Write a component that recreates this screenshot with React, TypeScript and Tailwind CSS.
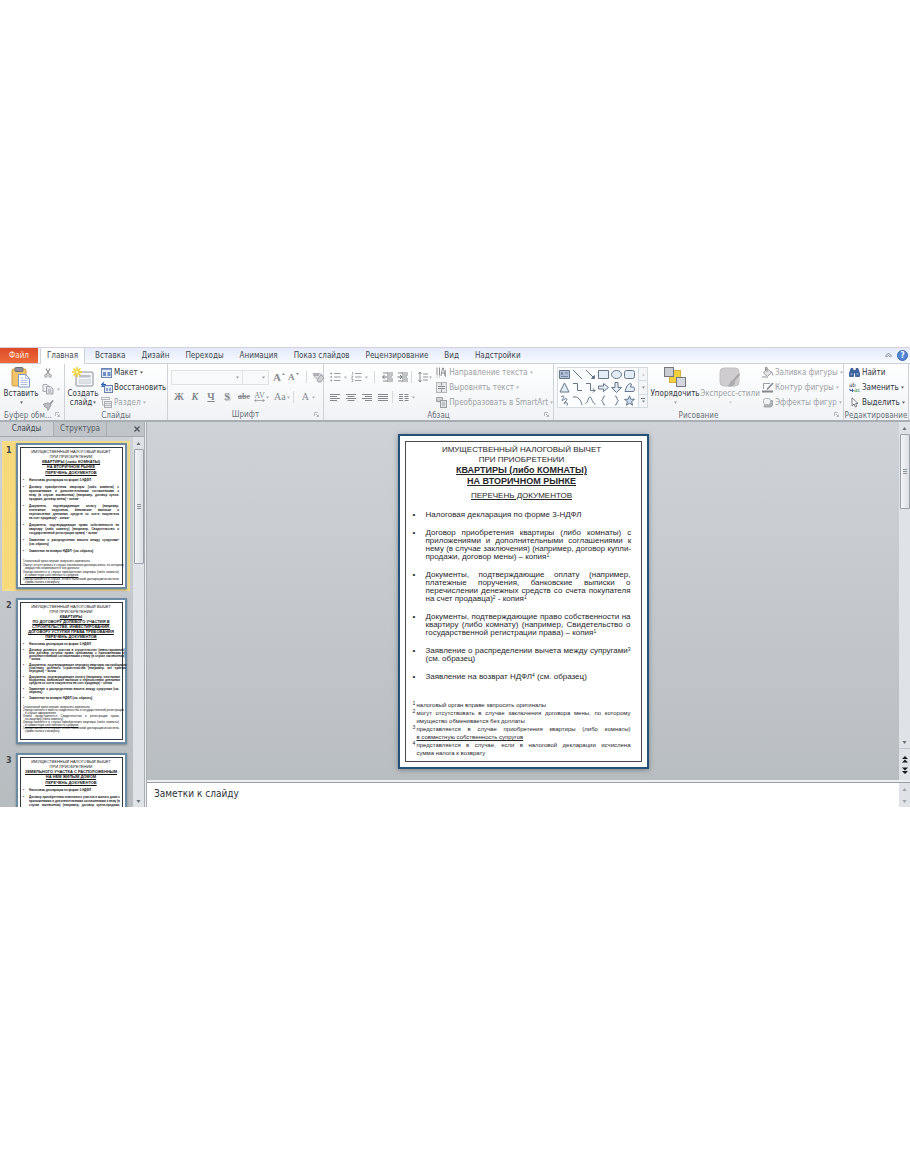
import React from 'react';
import clsx from 'clsx';

type IconProps = { className?: string };

interface Paragraph {
  lines: React.ReactNode[];
}

interface SlideContent {
  title: string[];
  heading: string[];
  subheading: string;
  items: Paragraph[];
  notes: Paragraph[];
}

const sup = (n: number) => <sup className="text-[62%]">{n}</sup>;

const slideOne: SlideContent = {
  title: ['ИМУЩЕСТВЕННЫЙ НАЛОГОВЫЙ ВЫЧЕТ', 'ПРИ ПРИОБРЕТЕНИИ'],
  heading: ['КВАРТИРЫ (либо КОМНАТЫ)', 'НА ВТОРИЧНОМ РЫНКЕ'],
  subheading: 'ПЕРЕЧЕНЬ ДОКУМЕНТОВ',
  items: [
    { lines: ['Налоговая декларация по форме 3-НДФЛ'] },
    {
      lines: [
        'Договор приобретения квартиры (либо комнаты) с',
        'приложениями и дополнительными соглашениями к',
        'нему (в случае заключения) (например, договор купли-',
        <>продажи, договор мены) – копия{sup(1)}</>,
      ],
    },
    {
      lines: [
        'Документы, подтверждающие оплату (например,',
        'платежные поручения, банковские выписки о',
        'перечислении денежных средств со счета покупателя',
        <>на счет продавца){sup(2)} - копия{sup(1)}</>,
      ],
    },
    {
      lines: [
        'Документы, подтверждающие право собственности на',
        'квартиру (либо комнату) (например, Свидетельство о',
        <>государственной регистрации права) – копия{sup(1)}</>,
      ],
    },
    { lines: [<>Заявление о распределении вычета между супругами{sup(3)}</>, '(см. образец)'] },
    { lines: [<>Заявление на возврат НДФЛ{sup(4)} (см. образец)</>] },
  ],
  notes: [
    { lines: ['налоговый орган вправе запросить оригиналы'] },
    {
      lines: [
        'могут отсутствовать в случае заключения договора мены, по которому',
        'имущество обменивается без доплаты',
      ],
    },
    {
      lines: [
        'представляется в случае приобретения квартиры (либо комнаты)',
        <u>в совместную собственность супругов</u>,
      ],
    },
    {
      lines: [
        'представляется в случае, если в налоговой декларации исчислена',
        'сумма налога к возврату',
      ],
    },
  ],
};

const slideTwo: SlideContent = {
  title: slideOne.title,
  heading: [
    'КВАРТИРЫ',
    'ПО ДОГОВОРУ ДОЛЕВОГО УЧАСТИЯ В',
    'СТРОИТЕЛЬСТВЕ, ИНВЕСТИРОВАНИЯ,',
    'ДОГОВОРУ УСТУПКИ ПРАВА ТРЕБОВАНИЯ',
  ],
  subheading: 'ПЕРЕЧЕНЬ ДОКУМЕНТОВ',
  items: [
    { lines: ['Налоговая декларация по форме 3-НДФЛ'] },
    {
      lines: [
        'Договор долевого участия в строительстве (инвестирования)',
        'или договор уступки права требования с приложениями и',
        'дополнительными соглашениями к нему (в случае заключения)',
        '– копия',
      ],
    },
    {
      lines: [
        'Документы, подтверждающие передачу квартиры застройщиком',
        'участнику долевого строительства (например, акт приема-',
        'передачи) – копия',
      ],
    },
    {
      lines: [
        'Документы, подтверждающие оплату (например, платежные',
        'поручения, банковские выписки о перечислении денежных',
        'средств со счета покупателя на счет продавца) – копия',
      ],
    },
    { lines: ['Заявление о распределении вычета между супругами (см.', 'образец)'] },
    { lines: ['Заявление на возврат НДФЛ (см. образец)'] },
  ],
  notes: [
    { lines: ['налоговый орган вправе запросить оригиналы'] },
    {
      lines: [
        'представляется вместо свидетельства о государственной регистрации',
        'в случае оформления',
      ],
    },
    {
      lines: [
        'либо представляется Свидетельство о регистрации права',
        'на квартиру (либо комнату)',
      ],
    },
    {
      lines: [
        'представляется в случае приобретения квартиры (либо комнаты)',
        <u>в совместную собственность супругов</u>,
      ],
    },
    {
      lines: [
        'представляется в случае, если в налоговой декларации исчислена',
        'сумма налога к возврату',
      ],
    },
  ],
};

const slideThree: SlideContent = {
  title: slideOne.title,
  heading: ['ЗЕМЕЛЬНОГО УЧАСТКА С РАСПОЛОЖЕННЫМ', 'НА НЕМ ЖИЛЫМ ДОМОМ'],
  subheading: 'ПЕРЕЧЕНЬ ДОКУМЕНТОВ',
  items: [
    { lines: ['Налоговая декларация по форме 3-НДФЛ'] },
    {
      lines: [
        'Договор приобретения земельного участка и жилого дома с',
        'приложениями и дополнительными соглашениями к нему (в',
        'случае заключения) (например, договор купли-продажи,',
        'договор мены) – копия',
      ],
    },
  ],
  notes: [],
};

function Lines({ lines }: Paragraph) {
  return (
    <>
      {lines.map((line, i) => (
        <span
          key={i}
          className={clsx(
            'block whitespace-nowrap',
            i < lines.length - 1 && 'text-justify [text-align-last:justify]',
          )}
        >
          {line}
        </span>
      ))}
    </>
  );
}

function MainSlide({ slide }: { slide: SlideContent }) {
  return (
    <article className="w-[251px] border-2 border-[#245178] bg-white p-[5px] font-['Liberation_Sans',sans-serif] text-[8px] leading-[8px] text-[#26262b] shadow-[0_1px_5px_rgba(60,70,80,0.5)]">
      <div className="h-[321px] border border-[#4a4a50] pl-[7px] pr-[10px] pt-[3px]">
        <header className="text-center leading-[10px]">
          {slide.title.map((t) => <p key={t}>{t}</p>)}
          {slide.heading.map((t) => (
            <p key={t} className="text-[9px] font-bold leading-[11px] underline">{t}</p>
          ))}
          <p className="mt-1 underline">{slide.subheading}</p>
        </header>
        <ul className="mt-[10px] flex flex-col gap-[10px]">
          {slide.items.map((item, i) => (
            <li key={i} className="flex">
              <span className="w-[13px] shrink-0">•</span>
              <div className="flex-1"><Lines {...item} /></div>
            </li>
          ))}
        </ul>
        <ol className="mt-5 text-[6px]">
          {slide.notes.map((note, i) => (
            <li key={i} className="flex">
              <span className="w-1 shrink-0 text-[5px] leading-[5px]">{i + 1}</span>
              <div className="flex-1"><Lines {...note} /></div>
            </li>
          ))}
        </ol>
      </div>
    </article>
  );
}

function Thumbnail({ slide, number, active }: { slide: SlideContent; number: number; active?: boolean }) {
  const dense = slide.heading.length > 2;
  return (
    <button
      type="button"
      aria-label={`Слайд ${number}`}
      className={clsx(
        'flex w-full shrink-0 border-2 pl-px text-left',
        active ? 'border-[#f3dc8b] bg-linear-to-r from-[#f8d978] to-[#fdf3c4]' : 'border-transparent',
      )}
    >
      <span className="w-[11px] shrink-0 pl-px text-[9px] font-bold leading-[14px] text-[#45484d]">{number}</span>
      <span className="block h-[146px] w-[111px] shrink-0 border-2 border-[#6b8ba5] bg-white p-[2px] font-['Liberation_Sans',sans-serif] text-[3px] leading-[4px] text-[#111] shadow-[0_1px_2px_rgba(60,70,80,0.5)]">
        <span className="block h-full border border-[#35393f] pl-[2px] pr-[3px] pt-px">
          <span className="block text-center text-[4px] leading-[5px]">
            {slide.title.map((t) => <span key={t} className="block whitespace-nowrap">{t}</span>)}
            {slide.heading.map((t) => (
              <span key={t} className="block whitespace-nowrap font-bold underline">{t}</span>
            ))}
            <span className={clsx('block font-bold underline', !dense && 'mt-px')}>{slide.subheading}</span>
          </span>
          <span className={clsx('flex flex-col gap-[3px] font-bold', dense ? 'mt-1 leading-[3px]' : 'mt-[3px]')}>
            {slide.items.map((item, i) => (
              <span key={i} className="flex">
                <span className="w-[6px] shrink-0">•</span>
                <span className="block flex-1"><Lines {...item} /></span>
              </span>
            ))}
          </span>
          <span className={clsx('flex flex-col font-[\'Liberation_Sans_Narrow\',sans-serif] leading-[3px]', dense ? 'mt-[6px]' : 'mt-[7px] gap-px')}>
            {slide.notes.map((note, i) => (
              <span key={i} className="flex">
                <span className="w-[2px] shrink-0">{i + 1}</span>
                <span className="block flex-1"><Lines {...note} /></span>
              </span>
            ))}
          </span>
        </span>
      </span>
    </button>
  );
}

function Caret({ className }: IconProps) {
  return (
    <svg viewBox="0 0 4 3" className={clsx('h-[3px] w-[3px] shrink-0 opacity-80', className)} fill="currentColor" aria-hidden="true">
      <path d="M0 0h4L2 3z" />
    </svg>
  );
}

function Svg({ className = 'h-3 w-3', box = '0 0 12 12', children }: { className?: string; box?: string; children: React.ReactNode }) {
  return (
    <svg viewBox={box} className={clsx('shrink-0', className)} fill="none" stroke="currentColor" strokeWidth="1" aria-hidden="true">
      {children}
    </svg>
  );
}

const PasteIcon = () => (
  <Svg className="h-[21px] w-5" box="0 0 20 21">
    <rect x="1" y="2" width="14" height="17" rx="1.5" fill="#f0c46a" stroke="#d29a3c" />
    <rect x="4" y="0.5" width="8" height="4" rx="1" fill="#8e939b" stroke="#6d7178" />
    <path d="M7.5 7.500h7l4 4v8.500h-11z" fill="#fff" stroke="#7b95c4" />
    <path d="M14.500 7.500v4h4M9.500 11h3M9.500 13.500h7M9.500 15.500h7M9.500 17.500h7" stroke="#8aa3cf" strokeWidth="0.700" />
  </Svg>
);

const ScissorsIcon = () => (
  <Svg className="h-[10px] w-3">
    <path d="M3.500 0.500 8 8M8.500 0.500 4 8" stroke="#85898e" strokeWidth="1.300" />
    <circle cx="3.500" cy="9.500" r="1.600" stroke="#85898e" />
    <circle cx="8.500" cy="9.500" r="1.600" stroke="#85898e" />
  </Svg>
);

const CopyIcon = () => (
  <Svg>
    <path d="M1 1.500h4l2 2v5H1z" fill="#ececee" stroke="#a9adb2" />
    <path d="M4.500 3.500h4l2.500 2.500v5H4.500zM6 7h3M6 9h3.500" fill="#e2e3e6" stroke="#a0a4aa" />
  </Svg>
);

const BrushIcon = () => (
  <Svg className="h-[11px] w-3">
    <path d="m11.500 0.500-4 5" stroke="#8e9297" strokeWidth="1.800" />
    <path d="m1 4.500 5-1.500 3.500 2.500-3.500 6-1-3-2.500-1z" fill="#b9bcc0" stroke="#9a9ea3" />
  </Svg>
);

const NewSlideIcon = () => (
  <Svg className="h-[21px] w-[22px]" box="0 0 22 21">
    <rect x="4" y="5" width="17" height="14" rx="1" fill="#f4f6f8" stroke="#8a9099" />
    <path d="M7 8h11.500v2.500H7z" fill="#b8c0ca" stroke="none" />
    <path d="M7 12.500h11.500v4H7z" fill="#dfe3e8" stroke="#c4cad2" strokeWidth="0.500" />
    <path d="M5 0v10M0 5h10M1.500 1.500l7 7M8.500 1.500l-7 7" stroke="#f0cf2e" strokeWidth="1.500" />
    <circle cx="5" cy="5" r="1.500" fill="#fff6b0" stroke="none" />
  </Svg>
);

const LayoutIcon = () => (
  <Svg className="h-[10px] w-[11px]" box="0 0 11 10">
    <rect x="0.500" y="0.500" width="10" height="9" fill="#e6ecf6" stroke="#6c86b4" />
    <path d="M1 1.500h9" stroke="#8aa2cc" />
    <path d="M2 4h3v4H2zM6.500 4h3v4h-3z" fill="#6f8fc4" stroke="none" />
  </Svg>
);

const ResetIcon = () => (
  <Svg className="h-[11px] w-3" box="0 0 12 11">
    <rect x="3.500" y="3.500" width="8" height="7" fill="#e3e9f4" stroke="#6c7fa6" />
    <path d="M5 6h2v3H5zM8 6h2v3H8z" fill="#8fa5cb" stroke="none" />
    <path d="M1 5V2.500h4M3 0.500l-2.500 2L3 4.500" stroke="#2b62b8" strokeWidth="1.200" />
  </Svg>
);

const SectionIcon = () => (
  <Svg className="h-[11px] w-[11px]" box="0 0 11 11">
    <rect x="0.500" y="0.500" width="8" height="2" stroke="#b4b7bb" />
    <rect x="3.500" y="4.500" width="7" height="6" fill="#ececee" stroke="#a9adb1" />
    <path d="M1.500 3v5h2M4 6.500h6M4 8.500h6" stroke="#b4b7bb" />
  </Svg>
);

const EraserIcon = () => (
  <Svg className="h-3 w-[13px]" box="0 0 13 12">
    <path d="M1 2.500h7l3 2-4 5-5-4z" fill="#dcdde0" stroke="#b3b6ba" />
    <path d="m5 9 4-5 3 3-3 4H6z" fill="#cfd1d4" stroke="#a3a6aa" />
    <path d="M2 4h5" stroke="#808489" />
  </Svg>
);

const BulletsIcon = () => (
  <Svg className="h-[10px] w-[11px]" box="0 0 11 10">
    <path d="M4 1.500h6.500M4 5h6.500M4 8.500h6.500" stroke="#9b9fa3" />
    <path d="M0.500 1.500h1.500M0.500 5h1.500M0.500 8.500h1.500" stroke="#8a8e93" strokeWidth="1.500" />
  </Svg>
);

const NumberingIcon = () => (
  <Svg className="h-[10px] w-[11px]" box="0 0 11 10">
    <path d="M4 1.500h6.500M4 5h6.500M4 8.500h6.500" stroke="#9b9fa3" />
    <path d="M1.500 0v2.500M0.500 4h1.500l-1.500 2h1.500M0.500 7.500h1.500v2H0.500" stroke="#8a8e93" strokeWidth="0.700" />
  </Svg>
);

const IndentIcon = ({ flip }: { flip?: boolean }) => (
  <Svg className="h-[10px] w-3" box="0 0 12 10">
    <path d="M1 1h10M6 3h5M6 5h4M6 7h5M1 9h10" stroke="#85898e" />
    {flip ? <path d="M0.500 5h4M3 3l2 2-2 2" stroke="#6f7378" /> : <path d="M5 5H1M2.500 3l-2 2 2 2" stroke="#6f7378" />}
    <path d="M5.500 0v10" stroke="#9b9fa3" strokeWidth="0.700" />
  </Svg>
);

const SpacingIcon = () => (
  <Svg className="h-3 w-[10px]" box="0 0 10 12">
    <path d="M5 3h5M5 6h5M5 9h5" stroke="#8e9297" />
    <path d="M2 1v10M0.500 3 2 1l1.500 2M0.500 9 2 11l1.500-2" stroke="#7e8287" strokeWidth="0.900" />
  </Svg>
);

const alignPaths: Record<string, string> = {
  left: 'M0 1.500h10M0 3.500h7M0 5.500h10M0 7.500h7',
  center: 'M0 1.500h10M1.500 3.500h7M0 5.500h10M1.500 7.500h7',
  right: 'M0 1.500h10M3 3.500h7M0 5.500h10M3 7.500h7',
  justify: 'M0 1.500h10M0 3.500h10M0 5.500h10M0 7.500h10',
};

const AlignIcon = ({ kind }: { kind: string }) => (
  <Svg className="h-[9px] w-[10px]" box="0 0 10 9">
    <path d={alignPaths[kind]} stroke="#85898e" />
  </Svg>
);

const ColumnsIcon = () => (
  <Svg className="h-[9px] w-[10px]" box="0 0 10 9">
    <path d="M0 1.500h4M0 3.500h4M0 5.500h4M0 7.500h4M5.500 1.500h4M5.500 3.500h4M5.500 5.500h4M5.500 7.500h4" stroke="#85898e" />
  </Svg>
);

const TextDirectionIcon = () => (
  <Svg className="h-[11px] w-[11px]" box="0 0 11 11">
    <path d="M1 0.500v8M3.500 0.500v8" stroke="#8a8e93" />
    <path d="M1 10.500v-1M3.500 10.500v-1M9.500 10V3" stroke="#a4a8ac" />
    <path d="m5 9 1.500-8h1L9 9M5.500 6h3" stroke="#8a8e93" />
  </Svg>
);

const AlignTextIcon = () => (
  <Svg className="h-[11px] w-[11px]" box="0 0 11 11">
    <rect x="0.500" y="0.500" width="10" height="10" fill="#e6e7e9" stroke="#b3b6ba" />
    <path d="M2 4.500h7M2 6.500h7M5.500 1v2.500M5.500 7.500V10" stroke="#8a8e93" />
  </Svg>
);

const SmartArtIcon = () => (
  <Svg className="h-[11px] w-[11px]" box="0 0 11 11">
    <path d="M0.500 0.500h6v4h-6zM0 2.500l3 3" fill="#cfd1d4" stroke="#a0a4a8" />
    <rect x="4.500" y="3.500" width="6" height="7" fill="#dddfe1" stroke="#999da1" />
    <path d="M6 6h3M6 8h3" stroke="#a0a4a8" />
  </Svg>
);

const ArrangeIcon = () => (
  <Svg className="h-[21px] w-[22px]" box="0 0 22 21">
    <rect x="5.500" y="3.500" width="11" height="12" fill="#f2cf3f" stroke="#d4b040" />
    <rect x="0.500" y="0.500" width="9" height="9" fill="#c9ccd1" stroke="#73777d" />
    <rect x="12.500" y="10.500" width="9" height="9" fill="#d4d7db" stroke="#73777d" />
  </Svg>
);

const QuickStylesIcon = () => (
  <Svg className="h-[21px] w-[22px]" box="0 0 22 21">
    <rect x="1" y="1" width="19" height="18" rx="4" fill="#cfcdd0" stroke="#c2c0c4" />
    <path d="m20.500 7-7 8" stroke="#a9a8ac" strokeWidth="2" />
    <path d="M14 13c-3 0-3 5-6 6 4 1.500 8 0 8-4z" fill="#aeadb1" stroke="none" />
  </Svg>
);

const FillIcon = () => (
  <Svg className="h-[11px] w-3" box="0 0 12 11">
    <path d="m5 1.500 4.500 4-4 4L1.500 6z" fill="#e4e5e7" stroke="#9a9ea2" />
    <path d="M5 5V0.500H3.500V4M9.500 4.500l1.500 4" stroke="#8d9196" />
    <path d="M0 10h6" stroke="#b3b6b9" strokeWidth="1.500" />
  </Svg>
);

const OutlineIcon = () => (
  <Svg className="h-[11px] w-3" box="0 0 12 11">
    <path d="M8 1.500H1.500V7" stroke="#9a9ea2" />
    <path d="m11 1-6 6.500" stroke="#85898e" strokeWidth="1.500" />
    <path d="M0 9.500h11" stroke="#85898e" strokeWidth="2" />
  </Svg>
);

const EffectsIcon = () => (
  <Svg className="h-[11px] w-3" box="0 0 12 11">
    <path d="M3.500 3.500h7v5l-2 1.500H2z" fill="#aeb1b5" stroke="#a4a7ab" />
    <rect x="1.500" y="1.500" width="7" height="6" rx="2" fill="#f0f1f2" stroke="#b5b8bb" />
  </Svg>
);

const FindIcon = () => (
  <Svg className="h-[9px] w-[11px]" box="0 0 11 9">
    <path d="M2 0.500h2v2h3v-2h2L10.500 5v3.500h-4V5h-2v3.500h-4V5z" fill="#3f66a5" stroke="#24477f" strokeWidth="0.700" />
    <path d="M1.500 6h2M7.500 6h2" stroke="#a9c2e8" />
  </Svg>
);

const ReplaceIcon = () => (
  <svg viewBox="0 0 12 11" className="h-[11px] w-3 shrink-0" aria-hidden="true">
    <text x="0" y="5" fontSize="6" fill="#3c4148">ab</text>
    <text x="5" y="10" fontSize="6" fill="#2f8a3d">ac</text>
    <path d="M1 6.500v2h3M3 7l1.500 1.500L3 10" fill="none" stroke="#3f66a5" />
  </svg>
);

const SelectIcon = () => (
  <Svg className="ml-[2px] h-[11px] w-2" box="0 0 8 11">
    <path d="M1 0.800v8l2-1.800 1.300 3 1.500-0.700L4.500 6.500H7z" fill="#fff" stroke="#6c7076" strokeWidth="0.900" />
  </Svg>
);

const shapeDrawings: { name: string; drawing: React.ReactNode }[] = [
  {
    name: 'Надпись',
    drawing: (
      <>
        <path d="M0.500 1.500h10v8h-10z" fill="#b3c1da" />
        <path d="M2 6l1-3 1 3M6 4h3M2 7.500h7" strokeWidth="0.800" />
      </>
    ),
  },
  { name: 'Линия', drawing: <path d="m1 1 9 9" /> },
  { name: 'Стрелка', drawing: <path d="m1 1 8 8M9.500 6.500v3h-3z" fill="currentColor" /> },
  { name: 'Прямоугольник', drawing: <path d="M0.500 1.500h10v8h-10z" fill="#e3edf5" /> },
  { name: 'Овал', drawing: <ellipse cx="5.500" cy="5.500" rx="5" ry="4" fill="#e3edf5" /> },
  { name: 'Скругленный прямоугольник', drawing: <rect x="0.500" y="1.500" width="10" height="8" rx="2" fill="#e3edf5" /> },
  { name: 'Треугольник', drawing: <path d="m5.500 1 4.500 9H1z" fill="#e3edf5" /> },
  { name: 'Соединительная линия', drawing: <path d="M1 1.500h4.500v7H10" /> },
  { name: 'Соединительная стрелка', drawing: <path d="M1 1.500h4.500v7H10M8 6.500l2 2-2 2" /> },
  { name: 'Стрелка вправо', drawing: <path d="M0.500 4h5V1.500l5 4-5 4V7h-5z" fill="#e3edf5" /> },
  { name: 'Стрелка вниз', drawing: <path d="M4 0.500h3v5h3.500l-5 5-5-5H4z" fill="#e3edf5" /> },
  { name: 'Полилиния', drawing: <path d="M1 9.500 2.500 5C4 2 6 1 7.500 2L6.500 5H9c2 0 2 3 0.500 4.500z" fill="#e3edf5" /> },
  { name: 'Рисованная кривая', drawing: <path d="M2 2c2-2 4-1 2 1.500S3 6 5 4.500s4-1 2 1.500-3 3-1 2 3 0 2 2.500" /> },
  { name: 'Дуга', drawing: <path d="M1 2c5-1 8 3 9 8" /> },
  { name: 'Кривая', drawing: <path d="M0.500 8.500C3 8 3 2 5 2s2 7 5.500 7" /> },
  { name: 'Левая фигурная скобка', drawing: <path d="M7 1C4 1 6 5 3.500 5.500 6 6 4 10 7 10" /> },
  { name: 'Правая фигурная скобка', drawing: <path d="M4 1c3 0 1 4 3.500 4.500C5 6 7 10 4 10" /> },
  { name: 'Звезда', drawing: <path d="m5.500 0.800 1.300 3.400 3.700 0.200-2.900 2.200 1 3.600-3.100-2-3.100 2 1-3.600L0.500 4.400l3.700-0.200z" fill="#cddcf0" /> },
];

function Launcher({ label }: { label: string }) {
  return (
    <button type="button" aria-label={label} className="absolute bottom-[3px] right-1 text-[#a7abb0]">
      <Svg className="h-[5px] w-[5px]" box="0 0 5 5">
        <path d="M0.500 4V0.500H4M2 2l2.500 2.500M4.500 2.500v2h-2" strokeWidth="0.800" />
      </Svg>
    </button>
  );
}

function Group({ title, className, launcher, children }: { title: string; className: string; launcher?: boolean; children: React.ReactNode }) {
  return (
    <section className={clsx('relative flex shrink-0 flex-col border-r border-[#cfd3d8]', className)}>
      <div className="flex h-[46px] pt-px">{children}</div>
      <h2 className={clsx('whitespace-nowrap leading-[11px] text-[#6b7178]', title.startsWith('Буфер') ? 'pl-1' : 'text-center')}>{title}</h2>
      {launcher && <Launcher label={`${title}: параметры`} />}
    </section>
  );
}

function RowButton({ icon, label, disabled, menu }: { icon: React.ReactNode; label: string; disabled?: boolean; menu?: boolean }) {
  return (
    <button
      type="button"
      className={clsx('flex h-[15px] items-center whitespace-nowrap', disabled ? 'text-[#9da1a6]' : 'text-[#33373c]')}
    >
      <span className="flex w-[13px] shrink-0">{icon}</span>
      {label}
      {menu && <Caret className="ml-[2px]" />}
    </button>
  );
}

function ToolButton({ label, className, menu, tight, children }: { label: string; className?: string; menu?: boolean; tight?: boolean; children: React.ReactNode }) {
  return (
    <button type="button" aria-label={label} className={clsx('flex h-4 shrink-0 items-center', tight ? 'gap-px' : 'gap-[3px]', className)}>
      {children}
      {menu && <Caret className="text-[#9da1a6]" />}
    </button>
  );
}

const Divider = () => <span className="h-3 w-px shrink-0 bg-[#d8dbde]" />;

function Ribbon() {
  return (
    <div className="flex h-[58px] overflow-hidden border-b-2 border-[#a9aeb4] bg-linear-to-b from-white to-[#f0f2f5]">
      <Group title="Буфер обм..." className="w-[65px]" launcher>
        <button type="button" className="flex w-[42px] flex-col items-center pt-[2px] text-[#33373c]">
          <PasteIcon />
          <span className="mt-px leading-[10px]">Вставить</span>
          <Caret className="mt-[2px]" />
        </button>
        <div className="flex flex-col text-[#b3b6ba]">
          <ToolButton label="Вырезать"><ScissorsIcon /></ToolButton>
          <ToolButton label="Копировать" menu><CopyIcon /></ToolButton>
          <ToolButton label="Формат по образцу"><BrushIcon /></ToolButton>
        </div>
      </Group>

      <Group title="Слайды" className="w-[103px]">
        <button type="button" className="flex w-9 flex-col items-center pt-[2px] leading-[9px] text-[#33373c]">
          <NewSlideIcon />
          <span className="mt-px">Создать</span>
          <span className="flex items-center gap-px">слайд <Caret /></span>
        </button>
        <div className="flex flex-col">
          <RowButton icon={<LayoutIcon />} label="Макет" menu />
          <RowButton icon={<ResetIcon />} label="Восстановить" />
          <RowButton icon={<SectionIcon />} label="Раздел" disabled menu />
        </div>
      </Group>

      <Group title="Шрифт" className="w-[156px]" launcher>
        <div className="flex flex-col gap-1 pl-[3px] pt-[4px] font-['Liberation_Serif',serif] text-[#85898e]">
          <div className="flex items-center">
            <span className="relative flex">
              <select aria-label="Шрифт" className="h-[15px] w-[72px] appearance-none border border-[#dfe2e5] bg-[#f8f9fa]" />
              <Caret className="pointer-events-none absolute right-1 top-[6px]" />
            </span>
            <span className="relative flex">
              <select aria-label="Размер шрифта" className="h-[15px] w-[26px] appearance-none border border-l-0 border-[#dfe2e5] bg-[#f8f9fa]" />
              <Caret className="pointer-events-none absolute right-1 top-[6px]" />
            </span>
            <ToolButton label="Увеличить размер" tight className="ml-1 w-[15px] text-[11px] font-bold">
              A
              <Svg className="mb-[6px] h-[2px] w-[3px]" box="0 0 3 2"><path d="M0 2h3L1.500 0z" fill="currentColor" stroke="none" /></Svg>
            </ToolButton>
            <ToolButton label="Уменьшить размер" tight className="w-[13px] text-[9px] font-bold">
              A
              <Svg className="mb-[6px] h-[2px] w-[3px]" box="0 0 3 2"><path d="M0 0h3L1.500 2z" fill="currentColor" stroke="none" /></Svg>
            </ToolButton>
            <span className="mx-[5px] flex"><Divider /></span>
            <ToolButton label="Очистить формат"><EraserIcon /></ToolButton>
          </div>
          <div className="flex items-center text-[10px] leading-none">
            <ToolButton label="Полужирный" className="w-4 justify-center font-bold">Ж</ToolButton>
            <ToolButton label="Курсив" className="w-4 justify-center font-bold italic">К</ToolButton>
            <ToolButton label="Подчеркнутый" className="w-4 justify-center font-bold underline">Ч</ToolButton>
            <ToolButton label="Тень" className="w-4 justify-center font-bold [text-shadow:1px_1px_1px_#aaa]">S</ToolButton>
            <ToolButton label="Зачеркнутый" className="w-[18px] justify-center text-[8px] font-bold line-through">abc</ToolButton>
            <ToolButton label="Межзнаковый интервал" tight className="ml-px" menu>
              <span className="flex flex-col items-center text-[8px] leading-[7px]">
                AV
                <Svg className="h-[3px] w-[11px]" box="0 0 11 3">
                  <path d="M1 1.500h9M2.500 0l-2 1.500 2 1.500M8.500 0l2 1.500-2 1.500" strokeWidth="0.700" />
                </Svg>
              </span>
            </ToolButton>
            <ToolButton label="Регистр" tight className="ml-[5px]" menu>Aa</ToolButton>
            <span className="ml-[3px] mr-2 flex"><Divider /></span>
            <ToolButton label="Цвет текста" menu>A</ToolButton>
          </div>
        </div>
      </Group>

      <Group title="Абзац" className="w-[230px]" launcher>
        <div className="flex w-[113px] flex-col gap-1 pl-[6px] pt-[4px] text-[#85898e]">
          <div className="flex items-center">
            <ToolButton label="Маркеры" menu><BulletsIcon /></ToolButton>
            <ToolButton label="Нумерация" className="ml-1" menu><NumberingIcon /></ToolButton>
            <span className="ml-[6px] mr-[7px] flex"><Divider /></span>
            <ToolButton label="Уменьшить уровень списка"><IndentIcon /></ToolButton>
            <ToolButton label="Увеличить уровень списка" className="ml-[3px]"><IndentIcon flip /></ToolButton>
            <span className="ml-[2px] mr-[6px] flex"><Divider /></span>
            <ToolButton label="Междустрочный интервал" menu tight><SpacingIcon /></ToolButton>
          </div>
          <div className="flex items-center">
            <div className="flex gap-[6px]">
              <ToolButton label="По левому краю"><AlignIcon kind="left" /></ToolButton>
              <ToolButton label="По центру"><AlignIcon kind="center" /></ToolButton>
              <ToolButton label="По правому краю"><AlignIcon kind="right" /></ToolButton>
              <ToolButton label="По ширине"><AlignIcon kind="justify" /></ToolButton>
            </div>
            <span className="ml-1 mr-[6px] flex"><Divider /></span>
            <ToolButton label="Колонки" menu><ColumnsIcon /></ToolButton>
          </div>
        </div>
        <div className="flex flex-col">
          <RowButton icon={<TextDirectionIcon />} label="Направление текста" disabled menu />
          <RowButton icon={<AlignTextIcon />} label="Выровнять текст" disabled menu />
          <RowButton icon={<SmartArtIcon />} label="Преобразовать в SmartArt" disabled menu />
        </div>
      </Group>

      <Group title="Рисование" className="w-[290px]" launcher>
        <div className="ml-[3px] mt-[2px] flex h-[41px] border border-[#d3dbe1] bg-[#fbfdfe]">
          <div className="grid grid-cols-6 text-[#66758a]">
            {shapeDrawings.map((shape) => (
              <button key={shape.name} type="button" aria-label={shape.name} className="flex h-[13px] w-[13px] items-center justify-center">
                <Svg className="h-[11px] w-[11px]" box="0 0 11 11">{shape.drawing}</Svg>
              </button>
            ))}
          </div>
          <div className="ml-[2px] flex w-[9px] flex-col divide-y divide-[#d3dbe1] border-l border-[#d3dbe1] bg-[#f3f5f7] text-[#6b7178]">
            <button type="button" aria-label="Вверх" className="flex flex-1 items-center justify-center text-[#b9bcc0]"><Caret className="rotate-180" /></button>
            <button type="button" aria-label="Вниз" className="flex flex-1 items-center justify-center"><Caret /></button>
            <button type="button" aria-label="Все фигуры" className="flex flex-1 flex-col items-center justify-center gap-px">
              <span className="h-px w-1 bg-current" />
              <Caret />
            </button>
          </div>
        </div>
        <button type="button" className="ml-[3px] flex w-12 flex-col items-center pt-[2px] text-[#33373c]">
          <ArrangeIcon />
          <span className="mt-px leading-[10px]">Упорядочить</span>
          <Caret className="mt-[2px] text-[#85898e]" />
        </button>
        <button type="button" className="ml-[3px] flex w-[56px] flex-col items-center pt-[2px] text-[#9da1a6]">
          <QuickStylesIcon />
          <span className="mt-px whitespace-nowrap leading-[10px]">Экспресс-стили</span>
          <Caret className="mt-[2px] text-[#c4c6c9]" />
        </button>
        <div className="ml-1 flex flex-col">
          <RowButton icon={<FillIcon />} label="Заливка фигуры" disabled menu />
          <RowButton icon={<OutlineIcon />} label="Контур фигуры" disabled menu />
          <RowButton icon={<EffectsIcon />} label="Эффекты фигур" disabled menu />
        </div>
      </Group>

      <Group title="Редактирование" className="w-[65px]">
        <div className="flex flex-col pl-[5px]">
          <RowButton icon={<FindIcon />} label="Найти" />
          <RowButton icon={<ReplaceIcon />} label="Заменить" menu />
          <RowButton icon={<SelectIcon />} label="Выделить" menu />
        </div>
      </Group>
    </div>
  );
}

const tabs = ['Вставка', 'Дизайн', 'Переходы', 'Анимация', 'Показ слайдов', 'Рецензирование', 'Вид', 'Надстройки'];

function TabBar() {
  return (
    <nav className="flex h-[17px] items-stretch border-b border-t border-b-[#cdd2d8] border-t-[#d9cfdd] bg-linear-to-b from-[#e3eafa] to-[#f7faff] text-[#42474e]">
      <button type="button" className="w-[38px] shrink-0 bg-linear-to-b from-[#dc4a28] to-[#ee6a3a] text-[#ffe9df]">Файл</button>
      <button type="button" className="-mb-px ml-[2px] w-[45px] shrink-0 rounded-t-xs border-x border-[#cdd2d8] bg-white">Главная</button>
      <div className="flex gap-4 pl-[10px]">
        {tabs.map((tab) => (
          <button key={tab} type="button" className="whitespace-nowrap">{tab}</button>
        ))}
      </div>
      <div className="ml-auto flex items-center gap-[5px] pr-[2px]">
        <button type="button" aria-label="Свернуть ленту">
          <Svg className="h-[7px] w-[7px]" box="0 0 7 7">
            <path d="m0.500 4 3-3 3 3-1 1-2-1.500L1.500 5z" stroke="#6c737c" strokeWidth="0.800" />
          </Svg>
        </button>
        <button type="button" aria-label="Справка" className="flex h-[11px] w-[11px] items-center justify-center rounded-full border border-[#3b68b0] bg-[#4f86d6] text-[8px] font-bold leading-[9px] text-white">?</button>
      </div>
    </nav>
  );
}

function Scrollbar({ thumb, muted, children }: { thumb?: string; muted?: boolean; children?: React.ReactNode }) {
  return (
    <div className={clsx('flex w-[11px] shrink-0 flex-col items-center bg-[#dfe3e8]', muted ? 'text-[#8e9297]' : 'text-[#4e545b]')}>
      <span className="flex h-3 items-center"><Caret className="w-[5px] rotate-180" /></span>
      {thumb && (
        <span className={clsx('flex w-[10px] flex-col items-center justify-center gap-px rounded-[1px] border border-[#9aa1ab] bg-linear-to-r from-[#f4f5f7] to-[#dcdfe4]', thumb)}>
          <i className="h-px w-1 bg-[#8e949c]" />
          <i className="h-px w-1 bg-[#8e949c]" />
          <i className="h-px w-1 bg-[#8e949c]" />
        </span>
      )}
      <span className="mt-auto flex h-3 items-center"><Caret className="w-[5px]" /></span>
      {children}
    </div>
  );
}

function SlidesPane() {
  return (
    <aside className="flex w-[144px] shrink-0 flex-col">
      <div className="flex h-[15px] items-stretch border-b border-[#a4a9af] bg-[#bfc4c9] text-[#565c63]">
        <button type="button" className="w-[53px] bg-[#cdd1d6] text-[#44494f]">Слайды</button>
        <button type="button" className="w-[54px] border-x border-[#a9aeb4]">Структура</button>
        <button type="button" aria-label="Закрыть" className="ml-auto mr-1 flex items-center text-[#4e545b]">
          <Svg className="h-[6px] w-[6px]" box="0 0 6 6"><path d="m0.500 0.500 5 5M5.500 0.500l-5 5" strokeWidth="1.300" /></Svg>
        </button>
      </div>
      <div className="flex h-[370px] overflow-hidden">
        <div className="flex flex-1 flex-col gap-[5px] overflow-hidden pl-[2px] pr-[3px] pt-1">
          <Thumbnail slide={slideOne} number={1} active />
          <Thumbnail slide={slideTwo} number={2} />
          <Thumbnail slide={slideThree} number={3} />
        </div>
        <Scrollbar thumb="h-[115px]" />
      </div>
    </aside>
  );
}

const DoubleArrow = ({ down }: { down?: boolean }) => (
  <svg viewBox="0 0 6 7" className={clsx('h-[7px] w-[6px]', down && 'rotate-180')} fill="#17191c" aria-hidden="true">
    <path d="m3 0 3 3H0zM3 3.500l3 3H0z" />
  </svg>
);

export default function App() {
  return (
    <main className="min-h-screen bg-white pt-[347px] font-['DejaVu_Sans_Condensed','DejaVu_Sans',sans-serif] text-[8px] leading-[14px]">
      <div className="overflow-hidden">
        <TabBar />
        <Ribbon />
        <div className="flex bg-linear-to-b from-[#cfd3d8] to-[#b7bcbf]">
          <SlidesPane />
          <div className="w-[3px] shrink-0 border-x border-[#a9aeb4] bg-[#eceef1]" />
          <div className="flex min-w-0 flex-1 flex-col">
            <div className="flex h-[358px]">
              <div className="flex flex-1 items-start justify-center pt-3">
                <MainSlide slide={slideOne} />
              </div>
              <Scrollbar thumb="h-[75px]">
                <span className="flex h-8 w-full flex-col items-center justify-center gap-1 border-t border-[#c3c8ce]">
                  <DoubleArrow />
                  <DoubleArrow down />
                </span>
              </Scrollbar>
            </div>
            <div className="h-[3px] border-b border-[#9a9fa5] bg-[#eceef1]" />
            <div className="flex h-6 bg-white">
              <textarea
                aria-label="Заметки"
                defaultValue="Заметки к слайду"
                className="min-w-0 flex-1 resize-none overflow-hidden pl-[7px] pt-1 text-[10px] leading-[14px] text-[#2e3237] outline-none"
              />
              <Scrollbar muted />
            </div>
          </div>
        </div>
      </div>
    </main>
  );
}
